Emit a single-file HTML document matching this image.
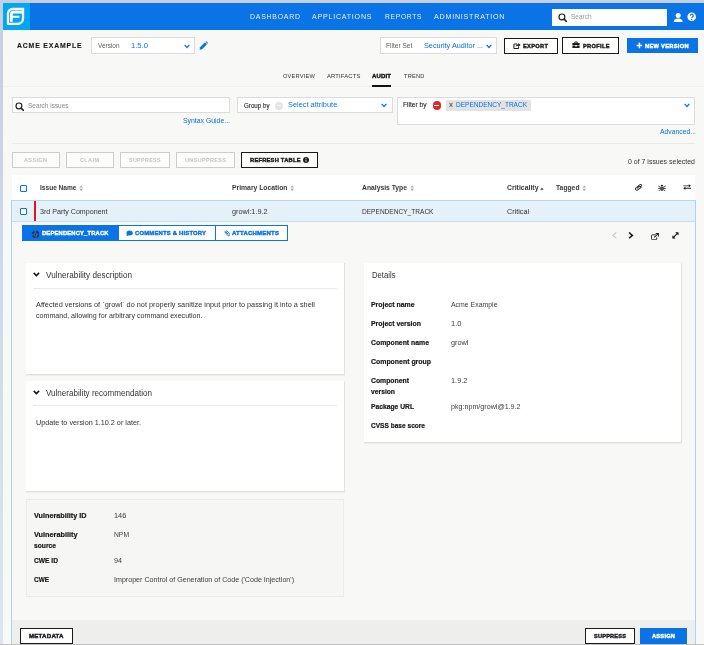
<!DOCTYPE html>
<html lang="en">
<head>
<meta charset="utf-8">
<title>ACME EXAMPLE - Audit</title>
<style>
html,body{margin:0;padding:0}
body{width:704px;height:645px;overflow:hidden;background:#f8f8f6;font-family:"Liberation Sans",sans-serif}
#app{position:relative;width:704px;height:645px;overflow:hidden;background:#f8f8f6}
#app div,#app span,#app svg{position:absolute;box-sizing:border-box}
.t{white-space:pre;line-height:12px;height:12px;transform-origin:0 50%;padding-right:3px}
#app #txt{left:0;top:0;width:704px;height:645px;will-change:transform}
.frame-t{left:0;top:0;width:704px;height:3px;background:#c6cfe0}
.frame-l{left:0;top:0;width:3px;height:645px;background:linear-gradient(#c6cfe0,#d0d9e9 47%,#dce5f1)}
.hdr{left:3px;top:3px;width:701px;height:27px;background:#0a73e5}
.logo{left:3px;top:3px;width:27px;height:27px;background:#02a6f2}
.inp{background:#fff;border:1px solid #dcdcdc}
.btn{background:#fff;border:1.5px solid #1a1a1a}
.btn-dis{background:#fdfdfc;border:1px solid #cdcdcd}
.btn-blue{background:#0a73e5}
.hr{height:1px;background:#e9e9e7}
.card{background:#fff;border:0 solid #fff;border-right:1px solid #e4e4e2;border-bottom:1px solid #e0e0de;box-shadow:0 1px 1px rgba(0,0,0,.04)}
.cb{width:7px;height:7px;border:1px solid #0a73e5;background:#fff;border-radius:1px}

</style>
</head>
<body>
<div id="app">
<!-- frame -->
<div class="frame-t"></div>
<div class="frame-l"></div>
<!-- header -->
<div class="hdr"></div>
<div class="logo"></div>
<svg style="left:3px;top:3px" width="27" height="27" viewBox="3 3 27 27">
  <path d="M12.6 9 H23.05 V18.6 a5.2 5.2 0 0 1 -5.2 5.2 H8 V13.6 a4.6 4.6 0 0 1 4.6 -4.6 Z" fill="none" stroke="#fff" stroke-width="2.3" stroke-linejoin="miter"/>
  <path d="M11.4 21.8 V14.2 a2 2 0 0 1 2 -2 H22.4" fill="none" stroke="#fff" stroke-width="2.7"/>
  <path d="M12 16.75 H19.4" fill="none" stroke="#fff" stroke-width="2"/>
</svg>
<div class="inp" style="left:551.6px;top:9px;width:115px;height:16.8px;border-color:#fff"></div>
<svg style="left:558.2px;top:13.2px" width="9.4" height="9.4" viewBox="0 0 10 10"><circle cx="4.2" cy="4.2" r="3.1" fill="none" stroke="#222" stroke-width="1.25"/><path d="M6.5 6.5 L8.9 8.9" stroke="#222" stroke-width="1.6" stroke-linecap="round"/></svg>
<svg style="left:672.8px;top:12.4px" width="10.4" height="10.6" viewBox="0 0 10 11"><circle cx="5" cy="3.6" r="2.6" fill="#fff"/><path d="M0.3 10.5 C0.6 7.6 2.6 6.8 5 6.8 C7.4 6.8 9.4 7.6 9.7 10.5 Z" fill="#fff"/></svg>
<svg style="left:687.2px;top:11.6px" width="10" height="10" viewBox="0 0 10 10"><circle cx="4.7" cy="4.7" r="4.3" fill="#fff"/><path d="M3.3 3.7 a1.45 1.45 0 1 1 2.2 1.2 c-0.6 0.4 -0.8 0.6 -0.8 1.2" fill="none" stroke="#0a73e5" stroke-width="1.2"/><circle cx="4.7" cy="7.5" r="0.7" fill="#0a73e5"/></svg>

<!-- project row -->
<div class="inp" style="left:91px;top:37px;width:104px;height:17px"></div>
<svg style="left:184px;top:43.7px" width="6" height="5" viewBox="0 0 6 5"><path d="M0.6 0.9 L3 3.5 L5.4 0.9" fill="none" stroke="#0a73e5" stroke-width="1.3"/></svg>
<svg style="left:199.3px;top:41px" width="9.3" height="9.3" viewBox="0 0 10 10"><path d="M0.6 9.4 L1.2 6.6 L6.4 1.4 L8.6 3.6 L3.4 8.8 Z" fill="#0a73e5"/><path d="M7.1 0.8 L7.8 0.2 L9.8 2.2 L9.2 2.9 Z" fill="#0a73e5"/></svg>
<div class="inp" style="left:379.5px;top:37px;width:117px;height:17px"></div>
<svg style="left:485.5px;top:43.7px" width="6" height="5" viewBox="0 0 6 5"><path d="M0.6 0.9 L3 3.5 L5.4 0.9" fill="none" stroke="#0a73e5" stroke-width="1.3"/></svg>
<div class="btn" style="left:504px;top:37.5px;width:54px;height:16px"></div>
<svg style="left:512.6px;top:41.6px" width="8.6" height="7.7" viewBox="0 0 10 9"><path d="M4.6 2.4 H1.9 a0.9 0.9 0 0 0 -0.9 0.9 V6.7 a0.9 0.9 0 0 0 0.9 0.9 H5.6 a0.9 0.9 0 0 0 0.9 -0.9 V5.4" fill="none" stroke="#1a1a1a" stroke-width="1.2"/><path d="M3.2 5.6 C3.3 3.6 4.4 2.7 6.2 2.6 V1.2 L8.9 3.5 L6.2 5.7 V4.3 C4.9 4.3 4 4.6 3.2 5.6 Z" fill="#1a1a1a"/></svg>
<div class="btn" style="left:562px;top:37px;width:57px;height:16.5px"></div>
<svg style="left:571.6px;top:41.2px" width="8" height="8" viewBox="0 0 8 8"><path d="M0.4 2 H7.6 V4 H0.4 Z M0.4 4.6 H3.2 V5.4 H4.8 V4.6 H7.6 V7 H0.4 Z" fill="#1a1a1a"/><path d="M2.8 2 V0.9 H5.2 V2" fill="none" stroke="#1a1a1a" stroke-width="0.9"/></svg>
<div class="btn-blue" style="left:626.5px;top:37.5px;width:71.5px;height:15.5px"></div>
<svg style="left:636px;top:42px" width="7" height="7" viewBox="0 0 7 7"><path d="M3.4 0.6 V6.2 M0.6 3.4 H6.2" stroke="#fff" stroke-width="1.5"/></svg>

<!-- subnav -->
<div class="hr" style="left:3px;top:86px;width:701px;background:#f0f0ee"></div>
<div style="left:372px;top:85px;width:19px;height:2px;background:#111"></div>

<!-- filter row -->
<div class="inp" style="left:12px;top:97px;width:218px;height:16px"></div>
<svg style="left:15px;top:101.8px" width="9.4" height="9.4" viewBox="0 0 10 10"><circle cx="4.2" cy="4.2" r="3.1" fill="none" stroke="#222" stroke-width="1.25"/><path d="M6.5 6.5 L8.9 8.9" stroke="#222" stroke-width="1.6" stroke-linecap="round"/></svg>
<div class="inp" style="left:237px;top:97px;width:156px;height:16px"></div>
<div style="left:275px;top:101.5px;width:8px;height:8px;border-radius:50%;background:#e4e4e4"></div>
<div style="left:277px;top:105px;width:4px;height:1px;background:#f6f6f6"></div>
<svg style="left:381px;top:103px" width="6" height="5" viewBox="0 0 6 5"><path d="M0.6 0.9 L3 3.5 L5.4 0.9" fill="none" stroke="#0a73e5" stroke-width="1.3"/></svg>
<div class="inp" style="left:397px;top:97px;width:298px;height:28px"></div>
<div style="left:432.5px;top:101px;width:8.6px;height:8.6px;border-radius:50%;background:#e2262b"></div>
<div style="left:434.4px;top:104.5px;width:4.8px;height:1.6px;background:#fff"></div>
<div style="left:446px;top:99.5px;width:84.5px;height:11px;background:#e3e3e3;border-radius:1px"></div>
<svg style="left:683.5px;top:103px" width="6" height="5" viewBox="0 0 6 5"><path d="M0.6 0.9 L3 3.5 L5.4 0.9" fill="none" stroke="#0a73e5" stroke-width="1.3"/></svg>

<div class="hr" style="left:12px;top:143px;width:683px"></div>

<!-- action buttons -->
<div class="btn-dis" style="left:12px;top:152px;width:47.5px;height:15.5px"></div>
<div class="btn-dis" style="left:66px;top:152px;width:48px;height:15.5px"></div>
<div class="btn-dis" style="left:119.5px;top:152px;width:50.5px;height:15.5px"></div>
<div class="btn-dis" style="left:175.5px;top:152px;width:59.5px;height:15.5px"></div>
<div class="btn" style="left:241px;top:151.5px;width:77px;height:16px"></div>
<svg style="left:302.5px;top:157px" width="6" height="6" viewBox="0 0 6 6"><circle cx="3" cy="3" r="3" fill="#1a1a1a"/><path d="M3 2.6 V4.8" stroke="#fff" stroke-width="0.9"/><circle cx="3" cy="1.5" r="0.55" fill="#fff"/></svg>

<!-- table -->
<div style="left:12px;top:175px;width:683px;height:25px;background:#fff"></div>
<div class="cb" style="left:20px;top:184.5px"></div>
<div style="left:11px;top:200px;width:685px;height:21.5px;background:#e4f1f8;border-top:1px solid #b4d8ee;border-bottom:1px solid #c2dff0"></div>
<div class="cb" style="left:20px;top:208px"></div>
<div style="left:34px;top:201px;width:2px;height:20px;background:#e5121b"></div>

<!-- detail panel borders -->
<div style="left:11px;top:200px;width:1px;height:445px;background:#a8d5ed"></div>
<div style="left:695px;top:200px;width:1px;height:445px;background:#a8d5ed"></div>

<!-- tabs -->
<div style="left:22px;top:225px;width:96px;height:16px;background:#0a73e5"></div>
<div style="left:117.5px;top:225px;width:98px;height:16px;background:#fff;border:1px solid #0a73e5"></div>
<div style="left:214.5px;top:225px;width:73px;height:16px;background:#fff;border:1px solid #0a73e5"></div>

<!-- cards -->
<div class="card" style="left:26px;top:263px;width:319px;height:111.5px"></div>
<div class="hr" style="left:33px;top:288px;width:304px"></div>
<div class="card" style="left:26px;top:381px;width:319px;height:110.5px"></div>
<div class="hr" style="left:33px;top:405px;width:304px"></div>
<div style="left:26px;top:499px;width:318px;height:98px;background:#f6f6f4;border:1px solid #ebebe9"></div>
<div class="card" style="left:363.5px;top:263px;width:318px;height:179.5px"></div>

<!-- footer -->
<div style="left:12px;top:620px;width:683px;height:25px;background:#eeeeec"></div>
<div class="btn" style="left:20px;top:627.5px;width:53px;height:16px"></div>
<div class="btn" style="left:585px;top:627.5px;width:50px;height:16px"></div>
<div class="btn-blue" style="left:639.6px;top:628px;width:47.6px;height:16px"></div>
<div style="left:0;top:644px;width:704px;height:1px;background:#c2c2c2"></div>

<!-- sort icons -->
<svg style="left:79.3px;top:185.2px" width="4.4" height="6.6" viewBox="0 0 4 6"><path d="M0.3 2.3 L2 0.4 L3.7 2.3 Z M0.3 3.5 L2 5.4 L3.7 3.5 Z" fill="#a8a8a8"/></svg>
<svg style="left:290px;top:185.2px" width="4.4" height="6.6" viewBox="0 0 4 6"><path d="M0.3 2.3 L2 0.4 L3.7 2.3 Z M0.3 3.5 L2 5.4 L3.7 3.5 Z" fill="#a8a8a8"/></svg>
<svg style="left:409.6px;top:185.2px" width="4.4" height="6.6" viewBox="0 0 4 6"><path d="M0.3 2.3 L2 0.4 L3.7 2.3 Z M0.3 3.5 L2 5.4 L3.7 3.5 Z" fill="#a8a8a8"/></svg>
<svg style="left:582.2px;top:185.2px" width="4.4" height="6.6" viewBox="0 0 4 6"><path d="M0.3 2.3 L2 0.4 L3.7 2.3 Z M0.3 3.5 L2 5.4 L3.7 3.5 Z" fill="#a8a8a8"/></svg>
<svg style="left:540.4px;top:186.6px" width="4" height="3" viewBox="0 0 4 3"><path d="M0.2 2.7 L1.9 0.5 L3.6 2.7 Z" fill="#444"/></svg>

<!-- header icons: paperclip, bug, exchange -->
<svg style="left:634.2px;top:184px" width="8.3" height="7.4" viewBox="0 0 9 8"><g transform="rotate(-38 4.5 4)" fill="none" stroke="#222" stroke-width="1"><path d="M7.6 2.6 H2.6 a1.5 1.5 0 0 0 0 3 H6.4 a0.9 0.9 0 0 0 0 -1.8 H3"/><path d="M7.6 2.6 a1.6 1.6 0 0 1 0 3.2"/></g></svg>
<svg style="left:658.2px;top:183.8px" width="8" height="7.6" viewBox="0 0 9 8.5"><path d="M2.7 3 H6.3 V5.6 a1.8 2.2 0 0 1 -3.6 0 Z" fill="#222"/><path d="M3.1 2.4 a1.4 1.5 0 0 1 2.8 0 Z" fill="#222"/><path d="M0.4 2.2 L2.6 3.6 M0.2 5 H2.6 M0.6 7.8 L2.8 6.2 M8.6 2.2 L6.4 3.6 M8.8 5 H6.4 M8.4 7.8 L6.2 6.2" stroke="#222" stroke-width="0.9" fill="none"/><path d="M4.5 3.2 V7.6" stroke="#fff" stroke-width="0.45"/></svg>
<svg style="left:683px;top:183.6px" width="8.4" height="6.5" viewBox="0 0 9 7"><path d="M0.3 1.6 H6.2 V0.2 L8.6 2 L6.2 3.6 V2.5 H0.3 Z M8.6 4.1 H2.6 V3 L0.3 4.6 L2.6 6.4 V5.1 H8.6 Z" fill="#222"/></svg>

<!-- tab icons -->
<svg style="left:30.5px;top:229.5px" width="9" height="9" viewBox="0 0 9 9"><circle cx="4.5" cy="4.5" r="3" fill="none" stroke="#2a3340" stroke-width="1.8" stroke-dasharray="3.4 1.3"/><circle cx="4.5" cy="4.5" r="0.9" fill="#2a3340"/></svg>
<svg style="left:126px;top:230px" width="7" height="7" viewBox="0 0 7 7"><ellipse cx="3.6" cy="3" rx="3.2" ry="2.5" fill="#0a73e5"/><path d="M1 4 L0.4 6.4 L3 5 Z" fill="#0a73e5"/></svg>
<svg style="left:223px;top:230px" width="7" height="8" viewBox="0 0 7 8"><g transform="rotate(-40 3.5 4)" fill="none" stroke="#0a73e5" stroke-width="0.9"><path d="M3.5 0.8 V5.8 a1.2 1.2 0 0 0 2.4 0 V2.2 a0.7 0.7 0 0 0 -1.4 0 V5.4"/></g></svg>

<!-- pager icons -->
<svg style="left:611.5px;top:232px" width="5" height="7" viewBox="0 0 5 7"><path d="M4.2 0.5 L1 3.4 L4.2 6.3" fill="none" stroke="#c6c6c6" stroke-width="1.1"/></svg>
<svg style="left:628px;top:232px" width="6" height="7" viewBox="0 0 6 7"><path d="M1 0.5 L4.4 3.4 L1 6.3" fill="none" stroke="#111" stroke-width="1.5"/></svg>
<svg style="left:651px;top:232.8px" width="8.4" height="7.5" viewBox="0 0 9 8"><path d="M5 1.9 H1.5 a0.9 0.9 0 0 0 -0.9 0.9 V6.3 a0.9 0.9 0 0 0 0.9 0.9 H5.2 a0.9 0.9 0 0 0 0.9 -0.9 V4.6" fill="none" stroke="#222" stroke-width="1"/><path d="M3.4 4.8 L7.2 1.2 M5 0.6 H8 V3.6" fill="none" stroke="#222" stroke-width="1.1"/></svg>
<svg style="left:672.4px;top:232.2px" width="7.2" height="7.2" viewBox="0 0 8 8"><path d="M1.6 6 L6 1.6" stroke="#111" stroke-width="1.2"/><path d="M3.6 0.4 H7.2 V4 Z M0.4 3.6 V7.2 H4 Z" fill="#111"/></svg>

<!-- card chevrons -->
<svg style="left:32.5px;top:272px" width="7" height="5" viewBox="0 0 7 5"><path d="M0.7 0.9 L3.4 3.6 L6.1 0.9" fill="none" stroke="#111" stroke-width="1.5"/></svg>
<svg style="left:32.5px;top:389.5px" width="7" height="5" viewBox="0 0 7 5"><path d="M0.7 0.9 L3.4 3.6 L6.1 0.9" fill="none" stroke="#111" stroke-width="1.5"/></svg>

<div id="txt">
<span class="t" style="left:249.5px;top:10.9px;font-size:7.4px;color:#eaf3fd;transform:scaleX(0.9393);letter-spacing:0.8px">DASHBOARD</span>
<span class="t" style="left:312px;top:10.9px;font-size:7.4px;color:#eaf3fd;transform:scaleX(0.9588);letter-spacing:0.8px">APPLICATIONS</span>
<span class="t" style="left:384.5px;top:10.9px;font-size:7.4px;color:#eaf3fd;transform:scaleX(0.9034);letter-spacing:0.8px">REPORTS</span>
<span class="t" style="left:434px;top:10.9px;font-size:7.4px;color:#eaf3fd;transform:scaleX(0.9646);letter-spacing:0.8px">ADMINISTRATION</span>
<span class="t" style="left:570.5px;top:11px;font-size:7.5px;color:#9a9a9a;transform:scaleX(0.8626)">Search</span>
<span class="t" style="left:17px;top:39.6px;font-size:7.4px;color:#1a1a1a;transform:scaleX(0.9288);font-weight:700;letter-spacing:0.9px;-webkit-text-stroke:0.12px currentColor">ACME EXAMPLE</span>
<span class="t" style="left:97.5px;top:39.8px;font-size:7.2px;color:#606060;transform:scaleX(0.8964)">Version</span>
<span class="t" style="left:130.5px;top:39.6px;font-size:7.5px;color:#0a73e5;transform:scaleX(1.0187)">1.5.0</span>
<span class="t" style="left:385.75px;top:39.8px;font-size:7.2px;color:#606060;transform:scaleX(0.9125)">Filter Set</span>
<span class="t" style="left:423.5px;top:39.6px;font-size:7.5px;color:#0a73e5;transform:scaleX(0.9692)">Security Auditor ...</span>
<span class="t" style="left:523px;top:40px;font-size:5.6px;color:#1a1a1a;transform:scaleX(1.0199);font-weight:700;letter-spacing:0.3px;-webkit-text-stroke:0.4px currentColor">EXPORT</span>
<span class="t" style="left:583px;top:39.8px;font-size:5.6px;color:#1a1a1a;transform:scaleX(1.0175);font-weight:700;letter-spacing:0.3px;-webkit-text-stroke:0.4px currentColor">PROFILE</span>
<span class="t" style="left:645px;top:39.8px;font-size:5.6px;color:#fff;transform:scaleX(1.0165);font-weight:700;letter-spacing:0.3px;-webkit-text-stroke:0.4px currentColor">NEW VERSION</span>
<span class="t" style="left:283px;top:70.1px;font-size:6px;color:#333;transform:scaleX(0.9437);letter-spacing:0.2px">OVERVIEW</span>
<span class="t" style="left:326.75px;top:70.1px;font-size:6px;color:#333;transform:scaleX(0.9637);letter-spacing:0.2px">ARTIFACTS</span>
<span class="t" style="left:372px;top:70.1px;font-size:6px;color:#111;transform:scaleX(0.9925);font-weight:700;letter-spacing:0.2px;-webkit-text-stroke:0.4px currentColor">AUDIT</span>
<span class="t" style="left:403.75px;top:70.1px;font-size:6px;color:#333;transform:scaleX(0.9431);letter-spacing:0.2px">TREND</span>
<span class="t" style="left:27.5px;top:100.1px;font-size:7.5px;color:#8a8a8a;transform:scaleX(0.8597)">Search issues</span>
<span class="t" style="left:183px;top:114.6px;font-size:7.5px;color:#0a73e5;transform:scaleX(0.9165)">Syntax Guide...</span>
<span class="t" style="left:243.5px;top:100px;font-size:6.4px;color:#222;transform:scaleX(0.9697);-webkit-text-stroke:0.1px currentColor">Group by</span>
<span class="t" style="left:287.75px;top:99.4px;font-size:7.8px;color:#0a73e5;transform:scaleX(0.9468)">Select attribute</span>
<span class="t" style="left:403px;top:99.2px;font-size:6.4px;color:#222;transform:scaleX(1.0337);-webkit-text-stroke:0.1px currentColor">Filter by</span>
<span class="t" style="left:448.8px;top:99px;font-size:8.5px;color:#555;transform:scaleX(0.8050);-webkit-text-stroke:0.2px currentColor">×</span>
<span class="t" style="left:455.5px;top:98.6px;font-size:7.5px;color:#0a73e5;transform:scaleX(0.8692)">DEPENDENCY_TRACK</span>
<span class="t" style="left:660px;top:125.8px;font-size:7.5px;color:#0a73e5;transform:scaleX(0.9089)">Advanced...</span>
<span class="t" style="left:24px;top:154.2px;font-size:5.6px;color:#c2c2c2;transform:scaleX(0.9804);font-weight:700;letter-spacing:0.4px">ASSIGN</span>
<span class="t" style="left:80px;top:154.2px;font-size:5.6px;color:#c2c2c2;transform:scaleX(0.9835);font-weight:700;letter-spacing:0.4px">CLAIM</span>
<span class="t" style="left:128.5px;top:154.2px;font-size:5.6px;color:#c2c2c2;transform:scaleX(0.9467);font-weight:700;letter-spacing:0.4px">SUPPRESS</span>
<span class="t" style="left:185px;top:154.2px;font-size:5.6px;color:#c2c2c2;transform:scaleX(0.9728);font-weight:700;letter-spacing:0.4px">UNSUPPRESS</span>
<span class="t" style="left:250px;top:154.2px;font-size:5.5px;color:#1a1a1a;transform:scaleX(1.0489);font-weight:700;letter-spacing:0.2px;-webkit-text-stroke:0.4px currentColor">REFRESH TABLE</span>
<span class="t" style="left:628px;top:156px;font-size:7.5px;color:#333;transform:scaleX(0.9287)">0 of 7 issues selected</span>
<span class="t" style="left:39.5px;top:182.4px;font-size:7.6px;color:#383838;transform:scaleX(0.8645);font-weight:700">Issue Name</span>
<span class="t" style="left:231.5px;top:182.4px;font-size:7.6px;color:#383838;transform:scaleX(0.8945);font-weight:700">Primary Location</span>
<span class="t" style="left:362px;top:182.4px;font-size:7.6px;color:#383838;transform:scaleX(0.8908);font-weight:700">Analysis Type</span>
<span class="t" style="left:506.5px;top:182.4px;font-size:7.6px;color:#383838;transform:scaleX(0.9102);font-weight:700">Criticality</span>
<span class="t" style="left:556px;top:182.4px;font-size:7.6px;color:#383838;transform:scaleX(0.8889);font-weight:700">Tagged</span>
<span class="t" style="left:40px;top:206.4px;font-size:7.8px;color:#333;transform:scaleX(0.9108)">3rd Party Component</span>
<span class="t" style="left:231.5px;top:206.4px;font-size:7.8px;color:#333;transform:scaleX(0.9308)">growl:1.9.2</span>
<span class="t" style="left:362px;top:206.4px;font-size:7.8px;color:#333;transform:scaleX(0.8420)">DEPENDENCY_TRACK</span>
<span class="t" style="left:506.5px;top:206.4px;font-size:7.8px;color:#333;transform:scaleX(0.9233)">Critical</span>
<span class="t" style="left:42px;top:227.3px;font-size:5.8px;color:#fff;transform:scaleX(0.9957);font-weight:700;letter-spacing:0.2px;-webkit-text-stroke:0.4px currentColor">DEPENDENCY_TRACK</span>
<span class="t" style="left:135px;top:227.3px;font-size:5.8px;color:#0a73e5;transform:scaleX(1.0131);font-weight:700;letter-spacing:0.2px;-webkit-text-stroke:0.4px currentColor">COMMENTS &amp; HISTORY</span>
<span class="t" style="left:231.5px;top:227.3px;font-size:5.8px;color:#0a73e5;transform:scaleX(1.0382);font-weight:700;letter-spacing:0.2px;-webkit-text-stroke:0.4px currentColor">ATTACHMENTS</span>
<span class="t" style="left:46px;top:269px;font-size:8.3px;color:#333;transform:scaleX(0.9848)">Vulnerability description</span>
<span class="t" style="left:36px;top:298.5px;font-size:7.3px;color:#333;transform:scaleX(1.0032)">Affected versions of `growl` do not properly sanitize input prior to passing it into a shell</span>
<span class="t" style="left:36px;top:309.5px;font-size:7.3px;color:#333;transform:scaleX(0.9728)">command, allowing for arbitrary command execution.</span>
<span class="t" style="left:46px;top:386.5px;font-size:8.3px;color:#333;transform:scaleX(0.9725)">Vulnerability recommendation</span>
<span class="t" style="left:36px;top:416.7px;font-size:7.3px;color:#333;transform:scaleX(0.9917)">Update to version 1.10.2 or later.</span>
<span class="t" style="left:34px;top:510px;font-size:7.3px;color:#161616;transform:scaleX(0.9932);font-weight:700;-webkit-text-stroke:0.2px currentColor">Vulnerability ID</span>
<span class="t" style="left:34px;top:529px;font-size:7.3px;color:#161616;transform:scaleX(0.9993);font-weight:700;-webkit-text-stroke:0.2px currentColor">Vulnerability</span>
<span class="t" style="left:34px;top:539.8px;font-size:7.3px;color:#161616;transform:scaleX(0.9191);font-weight:700;-webkit-text-stroke:0.2px currentColor">source</span>
<span class="t" style="left:34px;top:554.5px;font-size:7.3px;color:#161616;transform:scaleX(0.9105);font-weight:700;-webkit-text-stroke:0.2px currentColor">CWE ID</span>
<span class="t" style="left:34px;top:573.5px;font-size:7.3px;color:#161616;transform:scaleX(0.8807);font-weight:700;-webkit-text-stroke:0.2px currentColor">CWE</span>
<span class="t" style="left:113.5px;top:510px;font-size:7.3px;color:#3c3c3c;transform:scaleX(1.0051)">146</span>
<span class="t" style="left:113.5px;top:529px;font-size:7.3px;color:#3c3c3c;transform:scaleX(0.9249)">NPM</span>
<span class="t" style="left:113.5px;top:554.5px;font-size:7.3px;color:#3c3c3c;transform:scaleX(0.9846)">94</span>
<span class="t" style="left:113.5px;top:573.5px;font-size:7.3px;color:#3c3c3c;transform:scaleX(0.9735)">Improper Control of Generation of Code ('Code Injection')</span>
<span class="t" style="left:371.5px;top:269px;font-size:8.3px;color:#333;transform:scaleX(0.9261)">Details</span>
<span class="t" style="left:371px;top:298.5px;font-size:7.3px;color:#161616;transform:scaleX(0.9492);font-weight:700;-webkit-text-stroke:0.2px currentColor">Project name</span>
<span class="t" style="left:371px;top:317.5px;font-size:7.3px;color:#161616;transform:scaleX(0.9481);font-weight:700;-webkit-text-stroke:0.2px currentColor">Project version</span>
<span class="t" style="left:371px;top:336.5px;font-size:7.3px;color:#161616;transform:scaleX(0.9412);font-weight:700;-webkit-text-stroke:0.2px currentColor">Component name</span>
<span class="t" style="left:371px;top:355.75px;font-size:7.3px;color:#161616;transform:scaleX(0.9489);font-weight:700;-webkit-text-stroke:0.2px currentColor">Component group</span>
<span class="t" style="left:371px;top:374.5px;font-size:7.3px;color:#161616;transform:scaleX(0.9372);font-weight:700;-webkit-text-stroke:0.2px currentColor">Component</span>
<span class="t" style="left:371px;top:385.5px;font-size:7.3px;color:#161616;transform:scaleX(0.9242);font-weight:700;-webkit-text-stroke:0.2px currentColor">version</span>
<span class="t" style="left:371px;top:400.5px;font-size:7.3px;color:#161616;transform:scaleX(0.9219);font-weight:700;-webkit-text-stroke:0.2px currentColor">Package URL</span>
<span class="t" style="left:371px;top:419.5px;font-size:7.3px;color:#161616;transform:scaleX(0.8995);font-weight:700;-webkit-text-stroke:0.2px currentColor">CVSS base score</span>
<span class="t" style="left:450.5px;top:298.5px;font-size:7.3px;color:#3c3c3c;transform:scaleX(0.9475)">Acme Example</span>
<span class="t" style="left:450.5px;top:317.5px;font-size:7.3px;color:#3c3c3c;transform:scaleX(1.0338)">1.0</span>
<span class="t" style="left:450.5px;top:336.5px;font-size:7.3px;color:#3c3c3c;transform:scaleX(1.0036)">growl</span>
<span class="t" style="left:450.5px;top:374.5px;font-size:7.3px;color:#3c3c3c;transform:scaleX(1.0164)">1.9.2</span>
<span class="t" style="left:450.5px;top:400.5px;font-size:7.3px;color:#3c3c3c;transform:scaleX(0.9776)">pkg:npm/growl@1.9.2</span>
<span class="t" style="left:29px;top:630.2px;font-size:5.5px;color:#1a1a1a;transform:scaleX(1.1117);font-weight:700;letter-spacing:0.2px;-webkit-text-stroke:0.4px currentColor">METADATA</span>
<span class="t" style="left:594px;top:630.2px;font-size:5.5px;color:#1a1a1a;transform:scaleX(1.0203);font-weight:700;letter-spacing:0.2px;-webkit-text-stroke:0.4px currentColor">SUPPRESS</span>
<span class="t" style="left:652px;top:630.2px;font-size:5.5px;color:#fff;transform:scaleX(1.0409);font-weight:700;letter-spacing:0.2px;-webkit-text-stroke:0.4px currentColor">ASSIGN</span>
</div>
</div>
</body>
</html>
